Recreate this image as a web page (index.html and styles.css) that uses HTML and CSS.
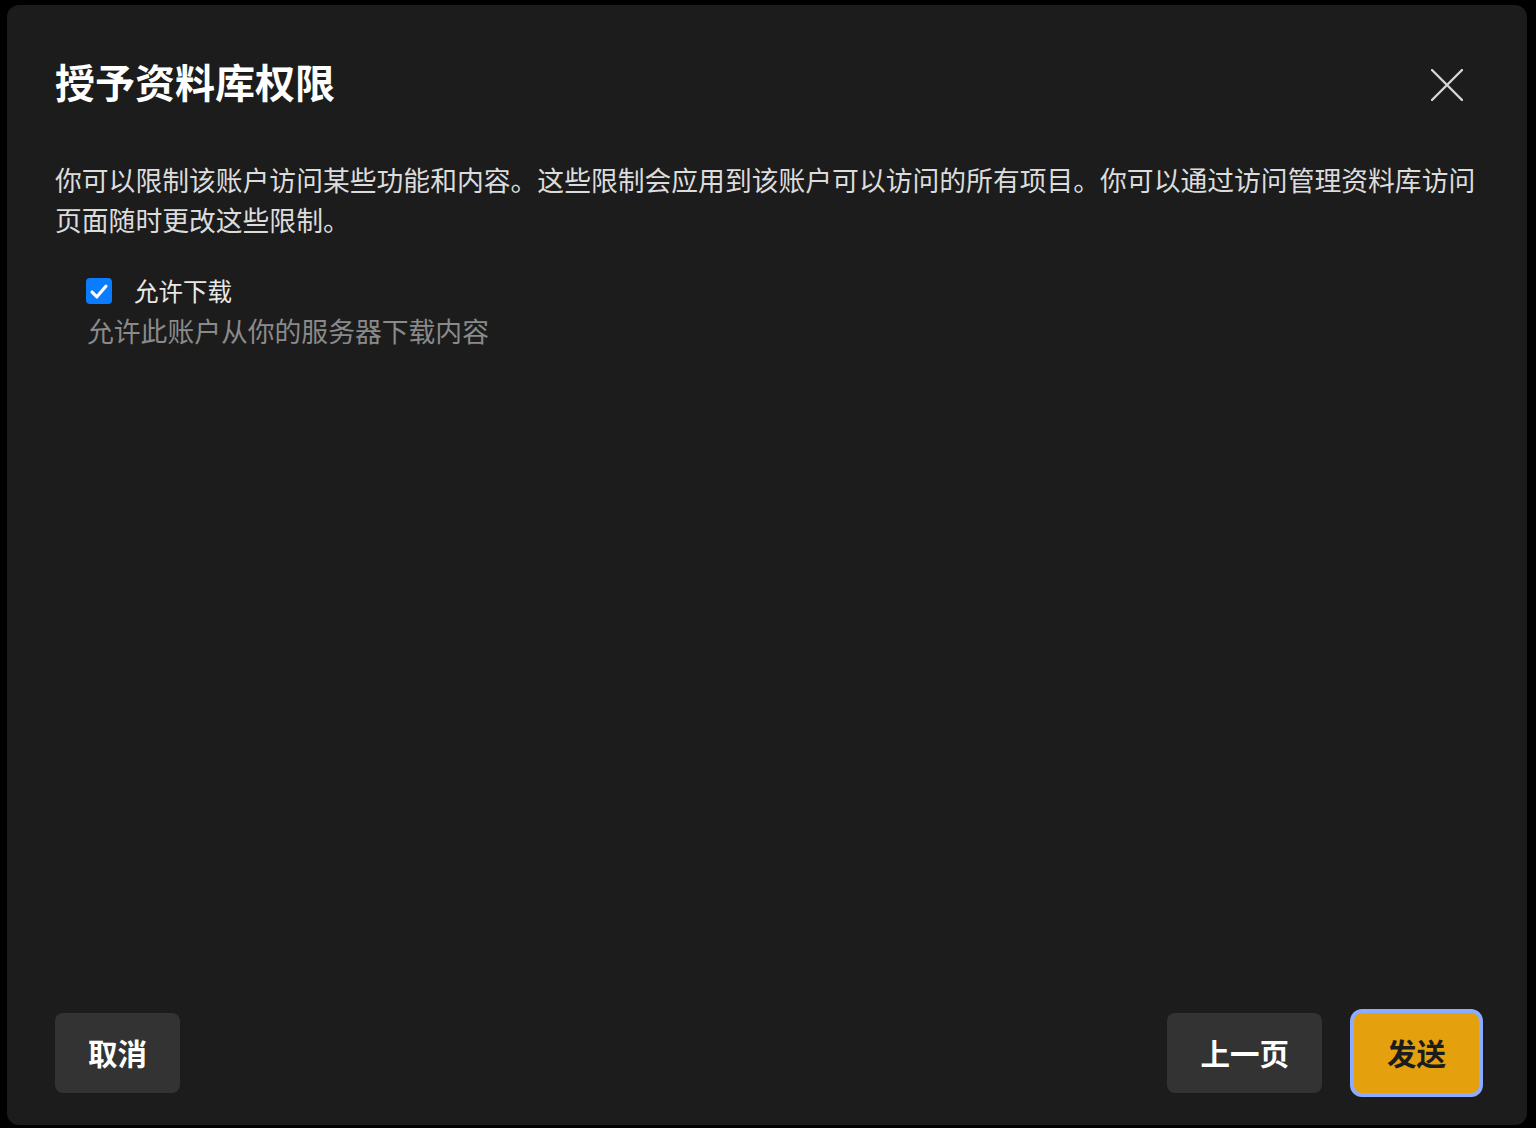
FILE: index.html
```html
<!DOCTYPE html>
<html lang="zh-CN">

<head>
  <meta charset="UTF-8">
  <meta name="viewport" content="width=device-width, initial-scale=1.0">
  <title>授予资料库权限</title>
  <link rel="stylesheet" href="styles.css">
</head>

<body>
  <div class="dialog">
    <header class="dialog-head">
      <h3 class="dialog-title">授予资料库权限</h3>
      <button class="close" aria-label="关闭">
        <svg width="32" height="32" viewBox="0 0 32 32">
          <path d="M1 1 L31 31 M31 1 L1 31" stroke="#d6d6d6" stroke-width="2.4" stroke-linecap="round" fill="none" />
        </svg>
      </button>
    </header>

    <p class="intro">你可以限制该账户访问某些功能和内容。这些限制会应用到该账户可以访问的所有项目。你可以通过访问管理资料库访问页面随时更改这些限制。</p>

    <div class="option">
      <label class="option-row">
        <span class="check">
          <svg width="18" height="15" viewBox="0 0 17 14">
            <path d="M2 7.5 L6.5 12 L15 2" stroke="#fff" stroke-width="3" stroke-linecap="round" stroke-linejoin="round" fill="none" />
          </svg>
        </span>
        允许下载
      </label>
      <div class="option-desc">允许此账户从你的服务器下载内容</div>
    </div>

    <footer class="dialog-foot">
      <button class="btn">取消</button>
      <div class="foot-right">
        <button class="btn">上一页</button>
        <button class="btn btn-primary">发送</button>
      </div>
    </footer>
  </div>
</body>

</html>
```

FILE: styles.css
```css
html,
body {
  margin: 0;
  background: #000;
}

body {
  padding: 5px 0 0 7px;
  font-family: "Noto Sans CJK SC", "Noto Sans", sans-serif;
}

.dialog {
  box-sizing: border-box;
  width: 1520px;
  height: 1120px;
  padding: 0 48px 32px;
  display: flex;
  flex-direction: column;
  background: #1c1c1c;
  border-radius: 12px;
}

.dialog-head {
  margin-top: 52px;
  display: flex;
  justify-content: space-between;
  align-items: center;
}

.dialog-title {
  margin: 0;
  font-size: 40px;
  line-height: 48px;
  font-weight: 700;
  color: #fff;
}

.close {
  margin: 8px 16px 0 0;
  padding: 0;
  width: 32px;
  height: 32px;
  border: 0;
  background: none;
}

.close svg {
  display: block;
}

.intro {
  margin: 55px 0 0;
  font-size: 26.8px;
  line-height: 40px;
  color: #dcdcdc;
}

.option {
  margin-top: 31px;
  padding-left: 31px;
}

.option-row {
  display: flex;
  align-items: center;
  gap: 22px;
  font-size: 24.5px;
  line-height: 40px;
  color: #e8e8e8;
}

.check {
  width: 26px;
  height: 26px;
  border-radius: 4px;
  background: #0a7cff;
  display: flex;
  align-items: center;
  justify-content: center;
}

.option-desc {
  padding-left: 1px;
  font-size: 26.8px;
  line-height: 40px;
  color: #8a8a8a;
}

.dialog-foot {
  margin-top: auto;
  display: flex;
  justify-content: space-between;
}

.foot-right {
  display: flex;
  gap: 32px;
}

.btn {
  height: 80px;
  padding: 0 33px 2px;
  border: 0;
  border-radius: 8px;
  background: #333;
  color: #fff;
  font-family: inherit;
  font-size: 29.5px;
  font-weight: 700;
}

.btn-primary {
  background: #e5a00d;
  color: #1c1c1c;
  box-shadow: 0 0 0 4px #8cacff;
}
```
